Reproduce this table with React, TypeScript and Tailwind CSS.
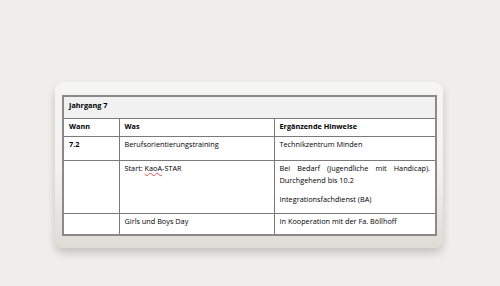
import React from 'react';

const cell = 'border border-[#7a7a7a] align-top px-[5px] pt-[1px] text-left';

export default function App() {
  return (
    <div className="w-[500px] h-[286px] bg-[#efeeea] pt-[82px] pl-[55px] font-['Open_Sans','Liberation_Sans',sans-serif] text-[7.3px] leading-[12px] text-black">
      <div className="w-[388px] h-[166px] rounded-[9px] bg-gradient-to-b from-[#f5f5f3] via-[#f3f3f1] to-[#dddcd6] shadow-[0_5px_8px_rgba(0,0,0,0.18)] pt-[13px] pl-[7px]">
        <table className="w-[373px] border-collapse border-2 border-[#8a8a8a] bg-white table-fixed">
          <colgroup>
            <col className="w-[56px]" />
            <col className="w-[155px]" />
            <col className="w-[162px]" />
          </colgroup>
          <tbody>
            <tr className="h-[22px] bg-[#f1f1f1]">
              <td colSpan={3} className={`${cell} px-[4px] pt-[2px] font-bold`}>Jahrgang 7</td>
            </tr>
            <tr className="h-[18px]">
              <td className={`${cell} px-[4px] font-bold`}>Wann</td>
              <td className={`${cell} font-bold`}>Was</td>
              <td className={`${cell} font-bold`}>Ergänzende Hinweise</td>
            </tr>
            <tr className="h-[24px]">
              <td className={`${cell} px-[4px] font-bold`}>7.2</td>
              <td className={cell}>Berufsorientierungstraining</td>
              <td className={cell}>Technikzentrum Minden</td>
            </tr>
            <tr className="h-[53px]">
              <td className={cell}></td>
              <td className={cell}>
                Start:{' '}
                <span className="underline decoration-wavy decoration-[#e05050] decoration-[0.5px] underline-offset-[1px]">KaoA</span>
                -STAR
              </td>
              <td className={cell}>
                <p className="text-justify [text-align-last:left]">Bei Bedarf (Jugendliche mit Handicap). Durchgehend bis 10.2</p>
                <p className="mt-[7px] pb-[3px]">Integrationsfachdienst (BA)</p>
              </td>
            </tr>
            <tr className="h-[22px]">
              <td className={cell}></td>
              <td className={cell}>Girls und Boys Day</td>
              <td className={cell}>In Kooperation mit der Fa. Böllhoff</td>
            </tr>
          </tbody>
        </table>
      </div>
    </div>
  );
}
